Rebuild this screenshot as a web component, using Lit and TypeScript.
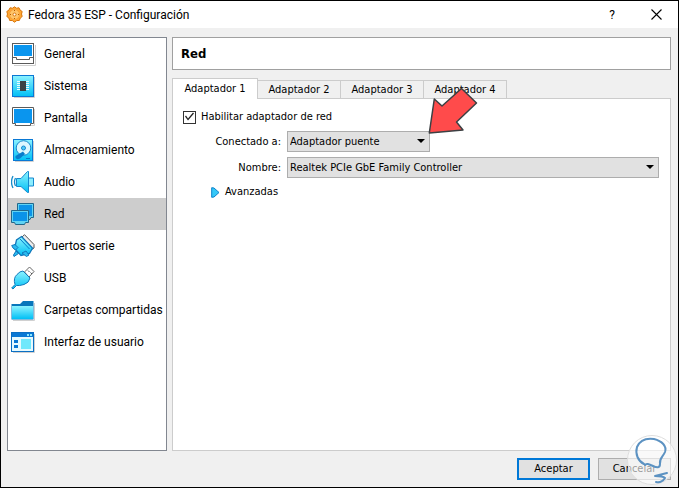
import { LitElement, html, css, svg } from "lit";
import { customElement, property, state } from "lit/decorators.js";
import { classMap } from "lit/directives/class-map.js";

const glyphs: Record<string, unknown> = {
  general: svg`
    <path d="M3 23.5H24.5V3" fill="none" stroke="#d0d0d0"/>
    <rect x="1.5" y="1.5" width="21" height="20" fill="#fff" stroke="#5b5b5b"/>
    <rect x="3" y="3" width="18" height="11" fill="#0a95ee"/>
    <path d="M1.5 15.5H5.5V17.5H18.5V15.5H22.5" fill="none" stroke="#5b5b5b"/>`,
  system: svg`
    <path d="M3 23.5H23.5V3" fill="none" stroke="#d0d0d0"/>
    <rect x="1.5" y="1.5" width="21" height="21" fill="url(#cyan)" stroke="#0a78d4"/>
    <path d="M6 7.5H18M6 9.5H18M6 11.5H18M6 13.5H18M6 15.5H18" stroke="#e8fbff"/>
    <rect x="9" y="7" width="6" height="10" fill="#3a4347"/>`,
  display: svg`
    <path d="M3 19.5H23.5V3" fill="none" stroke="#d0d0d0"/>
    <path d="M1.5 1.5H22.5V17.5H19.5V19.5H4.500V17.5H1.5Z" fill="#fff" stroke="#5b5b5b"/>
    <rect x="3" y="3" width="18" height="14" fill="#0a95ee"/>`,
  storage: svg`
    <path d="M4 23.5H22.5V3" fill="none" stroke="#d0d0d0"/>
    <rect x="2.5" y="1.5" width="19" height="21" fill="url(#cyan)" stroke="#0a78d4"/>
    <circle cx="12.5" cy="10" r="7.3" fill="#dcf8ff" stroke="#1689cf"/>
    <circle cx="12.5" cy="10" r="2" fill="#50cdf7" stroke="#1689cf"/>
    <path d="M4.5 18L12 13.5L14 16L9 20.5Q6 22 4.5 20Z" fill="#087ccc"/>
    <path d="M15 20.5H19" stroke="#087ccc"/>`,
  audio: svg`
    <path d="M4.500 8Q2.500 12 4.500 16M2 6Q-1 12 2 18" fill="none" stroke="#168bc9" stroke-width="1.300"/>
    <path d="M17.500 8H22.500V16H17.500Z" fill="#8ceefe" stroke="#1689cf"/>
    <path d="M5.500 8.500H10L16.500 1.500H17.500V22.500H16.500L10 16.500H5.500Z" fill="url(#cyan)" stroke="#1689cf"/>`,
  network: svg`
    <path d="M6.500 1.500H22.500V15.500H20L19 17.500H9.500L6.500 15Z" fill="#60d3f3" stroke="#22678a"/>
    <rect x="8" y="3" width="13" height="11" fill="#0b93e8"/>
    <path d="M.5 8.500H17.500V20.500H14.500L13.500 22.500H4.500L3.500 20.500H.5Z" fill="#60d3f3" stroke="#22678a"/>
    <rect x="2" y="10" width="14" height="9" fill="#0b93e8"/>`,
  serial: svg`
    <path d="M11 3L13.500 .7L23 10.500V14L20 16Z" fill="#eee" stroke="#555"/>
    <path d="M10.500 2.500L21.500 14L18.500 19.500L10 21.500L3.500 14.500L5.500 6Z" fill="url(#cyan)" stroke="#1178bb" stroke-width="1.300"/>
    <path d="M9 5L18.500 15" stroke="#087ccc"/>
    <path d="M.7 11.500L4 10.500L7 13.500L4.500 16L2 14ZM11 19L15 17L18 21L15.500 22.500ZM5 17L7.500 19.500L3 22.500L2.500 21Z" fill="#29baf0" stroke="#1178bb"/>`,
  usb: svg`
    <path d="M13.500 6L18.500 1L23 5.500L18 11Z" fill="#fff" stroke="#666"/>
    <path d="M17 4.500L18.500 6M19.500 6.500L21 8" stroke="#555"/>
    <path d="M12 5L19 12Q18 17 13 18.500Q8 20 5.500 19.500L2 23L.7 22L4 18.500Q2 12 6 8.500Q9 5 12 5Z" fill="url(#cyan)" stroke="#1178bb"/>`,
  folder: svg`
    <path d="M2 22.500H23.500V5" fill="none" stroke="#d0d0d0"/>
    <path d="M0 6H9L12 3H22.500V21.500H.5V6Z" fill="#0876bb"/>
    <path d="M1 8H22V21H1Z" fill="url(#cyan)"/>`,
  interface: svg`
    <path d="M2 22.500H23.500V4" fill="none" stroke="#d0d0d0"/>
    <rect x=".5" y="2.500" width="22" height="19" fill="#e7faff" stroke="#0a6fc4"/>
    <path d="M1 3H22V7H1Z" fill="#0a78d4"/>
    <path d="M16 4H18V6H16ZM19 4H21V6H19Z" fill="#8be9ff"/>
    <path d="M3 10H7V13H3ZM3 15H7V18H3Z" fill="#0a78d4"/>
    <path d="M10 9H20V19H10Z" fill="#70e8fc"/>`,
};

const cyan = svg`<defs><linearGradient id="cyan" x1="0" y1="0" x2="0" y2="1">
  <stop offset="0" stop-color="#8df3ff"/><stop offset="1" stop-color="#00bff5"/>
</linearGradient></defs>`;

@customElement("category-icon")
export class CategoryIcon extends LitElement {
  @property() name = "general";
  static styles = css`
    :host { display: block; flex: none; width: 25px; height: 24px; }
    svg { display: block; }
  `;
  render() {
    return html`<svg width="25" height="24" viewBox="0 0 25 24" aria-hidden="true">${cyan}${glyphs[this.name]}</svg>`;
  }
}

const categories = [
  ["general", "General"],
  ["system", "Sistema"],
  ["display", "Pantalla"],
  ["storage", "Almacenamiento"],
  ["audio", "Audio"],
  ["network", "Red"],
  ["serial", "Puertos serie"],
  ["usb", "USB"],
  ["folder", "Carpetas compartidas"],
  ["interface", "Interfaz de usuario"],
];

@customElement("app-root")
export class AppRoot extends LitElement {
  @state() private category = "network";
  @state() private tab = 1;

  static styles = css`
    :host { display: block; color: #000; font: 11px/16px "DejaVu Sans Condensed", "DejaVu Sans", sans-serif; }
    * { box-sizing: border-box; }
    button, select { font: inherit; color: inherit; margin: 0; border-radius: 0; }
    .window { display: flex; flex-direction: column; min-height: 100vh; border: 1px solid #000; background: #f0f0f0; }
    .titlebar { display: flex; align-items: center; height: 27px; padding-left: 5px; background: #fff; font: 12px/16px Roboto, sans-serif; }
    .title { flex: 1; margin: 0 0 0 5px; font: inherit; }
    .caption { display: grid; place-items: center; width: 44px; height: 24px; padding: 0; border: 0; background: none; }
    .body { flex: 1; display: grid; grid-template-columns: 160px minmax(0, 1fr); gap: 5px; padding: 9px 7px 7px 6px; }
    .sidebar { border: 1px solid #828790; background: #fff; font: 12px/16px Roboto, sans-serif; }
    .category { display: flex; align-items: center; gap: 8px; width: 100%; height: 32px; padding: 0 0 0 3px; border: 0; background: none; text-align: left; white-space: nowrap; }
    .category.selected { background: #cdcdcd; }
    .main { display: flex; flex-direction: column; }
    .heading { height: 33px; margin: 0; padding: 0 8px; border: 1px solid #a0a0a0; background: #fff; font: bold 13px/32px "DejaVu Sans Condensed", "DejaVu Sans", sans-serif; }
    .tabs { display: flex; align-items: flex-end; height: 21px; margin-top: 7px; }
    .tab { flex: none; width: 83px; height: 18px; padding: 0; border: 1px solid #ccc; border-width: 1px 1px 0 0; background: #f0f0f0; }
    .tab.selected { position: relative; width: 86px; height: 21px; margin-bottom: -1px; border-left-width: 1px; background: #fff; }
    .panel { flex: 1; padding: 11px 11px 11px 10px; border: 1px solid #ccc; background: #fff; }
    .enable { display: flex; align-items: center; gap: 5px; height: 14px; width: fit-content; }
    .tick { appearance: none; display: grid; width: 13px; height: 13px; margin: 0; border: 1px solid #333; background: #fff; }
    .tick:checked::before { content: ""; background: #222; clip-path: polygon(1px 5px, 2px 4px, 4px 7px, 9px 1px, 10px 2px, 4px 9px); }
    .form { display: grid; grid-template-columns: 98px minmax(0, 1fr); gap: 5px 6px; margin-top: 7px; }
    .form label { line-height: 21px; text-align: right; }
    .combo { position: relative; display: flex; }
    .short { width: 143px; }
    .combo select { appearance: none; width: 100%; height: 21px; padding: 0 20px 0 2px; border: 1px solid #adadad; background: #e1e1e1; }
    .combo::after { content: ""; position: absolute; right: 5px; top: 8px; width: 8px; height: 4px; background: #000; clip-path: polygon(0 0, 100% 0, 50% 100%); pointer-events: none; }
    .pointer { position: absolute; left: 140px; top: -45px; pointer-events: none; }
    .advanced { display: flex; align-items: center; gap: 5px; margin: 6px 0 0 28px; padding: 0; border: 0; background: none; }
    .footer { display: flex; justify-content: flex-end; gap: 8px; padding: 0 7px 7px; }
    .action { width: 73px; height: 22px; padding: 0; border: 1px solid #adadad; background: #e1e1e1; }
    .action.primary { border: 2px solid #0078d7; }
    .cancel { position: relative; }
    .mark { position: absolute; right: -6px; bottom: -5px; pointer-events: none; }
  `;

  render() {
    return html`
      <div class="window">
        <header class="titlebar">
          <svg width="17" height="17" viewBox="0 0 17 17" aria-hidden="true">
            <path d="M8.500 .8L10.500 2.200L13 1.800L14 4L16.200 5.500L15.500 8L16.200 10.500L14.300 12L13.300 14.500L10.800 14.500L8.500 16.200L6.300 14.500L3.700 14.500L2.900 12L.8 10.500L1.500 8L.8 5.500L3 4L4 1.800L6.500 2.200Z" fill="#ffa733" stroke="#d8750b"/>
            <circle cx="8.500" cy="8.500" r="5" fill="#ffc56b" stroke="#f8a23a"/>
            <circle cx="8.500" cy="8.500" r="1.500" fill="#fff" stroke="#d8750b"/>
            <path d="M8 4H9V5H8ZM4 8H5V9H4ZM12 8H13V9H12ZM8 12H9V13H8Z" fill="#b55b00"/>
          </svg>
          <h1 class="title">Fedora 35 ESP - Configuración</h1>
          <button class="caption" aria-label="Ayuda">?</button>
          <button class="caption" aria-label="Cerrar">
            <svg width="11" height="11" viewBox="0 0 11 11"><path d="M.5 .5L10.500 10.500M10.500 .5L.5 10.500" stroke="#000" stroke-width="1.100"/></svg>
          </button>
        </header>
        <div class="body">
          <nav class="sidebar">
            ${categories.map(([id, label]) => html`
              <button class=${classMap({ category: true, selected: id === this.category })} @click=${() => (this.category = id)}>
                <category-icon name=${id}></category-icon>${label}
              </button>`)}
          </nav>
          <main class="main">
            <h2 class="heading">Red</h2>
            <div class="tabs" role="tablist">
              ${[1, 2, 3, 4].map((n) => html`
                <button role="tab" aria-selected=${n === this.tab} class=${classMap({ tab: true, selected: n === this.tab })} @click=${() => (this.tab = n)}>Adaptador ${n}</button>`)}
            </div>
            <section class="panel" role="tabpanel">
              <label class="enable"><input class="tick" type="checkbox" checked />Habilitar adaptador de red</label>
              <div class="form">
                <label for="attached">Conectado a:</label>
                <div class="combo short">
                  <select id="attached"><option>Adaptador puente</option></select>
                  <svg class="pointer" width="52" height="50" viewBox="0 0 52 50" aria-hidden="true">
                    <path d="M2.300 47L7.300 13L15 20L34.500 2.500L49.500 17L29.500 36L36 44Z" fill="#ff4b4b" stroke="#3c4043" stroke-width="1.500" stroke-linejoin="round"/>
                  </svg>
                </div>
                <label for="name">Nombre:</label>
                <div class="combo">
                  <select id="name"><option>Realtek PCIe GbE Family Controller</option></select>
                </div>
              </div>
              <button class="advanced" aria-expanded="false">
                <svg width="9" height="11" viewBox="0 0 9 11" aria-hidden="true"><path d="M.7 .7L3 1L8 5.500L3 10L.7 10.300Z" fill="#35c8f7" stroke="#0a82cc"/></svg>
                Avanzadas
              </button>
            </section>
          </main>
        </div>
        <footer class="footer">
          <button class="action primary">Aceptar</button>
          <div class="cancel">
            <button class="action">Cancelar</button>
            <svg class="mark" width="50" height="50" viewBox="0 0 50 50" aria-hidden="true">
              <circle cx="25" cy="25" r="24.500" fill="#fff" fill-opacity=".6" stroke="#dedede"/>
              <path d="M17 29C11 26 8 19 10 12C13 5 20 3 27 4C35 6 40 11 38 17C36 22 32 23 33 29C33 33 30 33 26 31C22 29 19 28 18 30M40 38L28 41C33 41 37 42 38 43C36 46 33 48 29 47" fill="none" stroke="#5c92c2" stroke-width="2" stroke-linecap="round" stroke-linejoin="round"/>
            </svg>
          </div>
        </footer>
      </div>`;
  }
}
